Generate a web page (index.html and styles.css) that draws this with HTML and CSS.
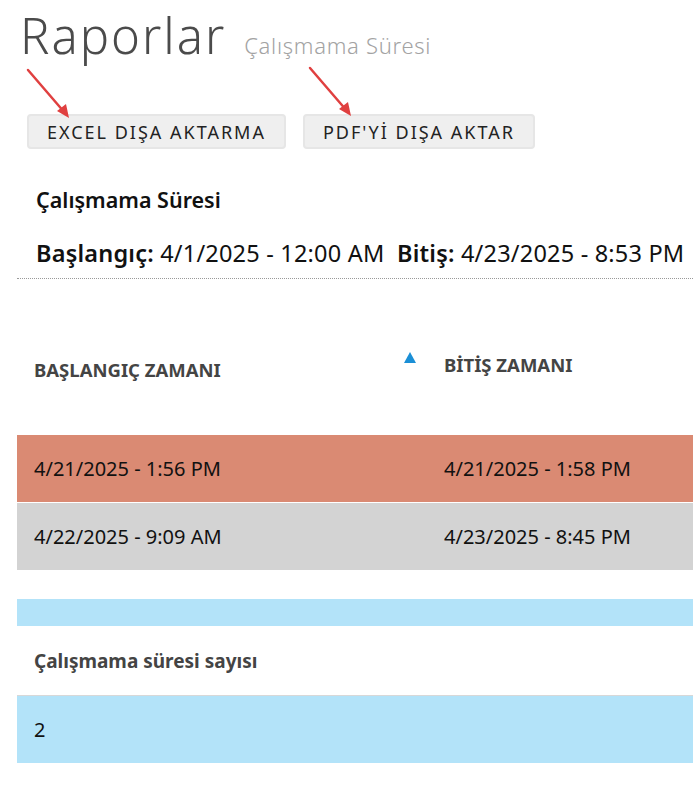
FILE: index.html
```html
<!DOCTYPE html>
<html lang="tr">
<head>
<meta charset="utf-8">
<link rel="stylesheet" href="styles.css">
</head>
<body>
<div class="page">
  <header class="title-row">
    <h1 class="title">Raporlar</h1>
    <span class="subtitle">Çalışmama Süresi</span>
  </header>
  <div class="actions">
    <button class="btn">EXCEL DIŞA AKTARMA</button>
    <button class="btn">PDF'Yİ DIŞA AKTAR</button>
  </div>
  <section class="summary">
    <h2 class="summary-title">Çalışmama Süresi</h2>
    <p class="range"><b>Başlangıç:</b> 4/1/2025 - 12:00 AM&nbsp; <b>Bitiş:</b> 4/23/2025 - 8:53 PM</p>
  </section>
  <div class="table">
    <div class="thead">
      <div class="th th-start">BAŞLANGIÇ ZAMANI</div>
      <div class="th th-end"><span class="sort"></span>BİTİŞ ZAMANI</div>
    </div>
    <div class="row row-red"><div class="cell">4/21/2025 - 1:56 PM</div><div class="cell">4/21/2025 - 1:58 PM</div></div>
    <div class="row row-grey"><div class="cell">4/22/2025 - 9:09 AM</div><div class="cell">4/23/2025 - 8:45 PM</div></div>
  </div>
  <div class="band"></div>
  <div class="count-label">Çalışmama süresi sayısı</div>
  <div class="count-row">2</div>

  <svg class="arrow arrow-1" width="50" height="56" viewBox="0 0 50 56"><line x1="3" y1="3" x2="40" y2="46" stroke="#e04040" stroke-width="2.5" stroke-linecap="round"/><polygon points="44,51 32,44 41,37" fill="#e04040"/></svg>
  <svg class="arrow arrow-2" width="50" height="56" viewBox="0 0 50 56"><line x1="3" y1="3" x2="40" y2="46" stroke="#e04040" stroke-width="2.5" stroke-linecap="round"/><polygon points="44,51 32,44 41,37" fill="#e04040"/></svg>
</div>
</body>
</html>
```
FILE: styles.css
```css
* { box-sizing: border-box; }
html, body { margin: 0; padding: 0; background: #fff; }
body { font-family: "Noto Sans", "Open Sans", sans-serif; color: #111; overflow: hidden; }
.page { position: relative; padding: 0 0 0 17px; width: 693px; }
.title-row { display: flex; align-items: baseline; gap: 18px; padding: 8px 0 0 3px; height: 70px; }
.title { margin: 0; font-size: 49px; font-weight: 300; letter-spacing: 2px; color: #4b4b4b; line-height: 54px; }
.subtitle { font-size: 22px; font-weight: 300; color: #a3a3a3; letter-spacing: 0.7px; }
.actions { display: flex; gap: 17px; padding: 44px 0 0 10px; }
.btn { font-family: inherit; font-size: 18px; letter-spacing: 2px; color: #222; background: #efefef; border: 2px solid #e6e6e6; border-radius: 4px; height: 35px; padding: 0 18px; }
.summary { padding: 37px 0 0 19px; }
.summary-title { margin: 0; font-size: 21.5px; font-weight: 600; line-height: 28px; }
.range { margin: 25px 0 0; font-size: 23.5px; line-height: 28px; white-space: nowrap; letter-spacing: 0.2px; }
.range b { font-weight: 600; }
.table { margin-top: 11px; border-top: 1px dotted #999; }
.thead { display: grid; grid-template-columns: 410px 1fr; height: 156px; }
.th { font-size: 18.5px; font-weight: 700; color: #444; }
.th-start { padding: 78px 0 0 17px; }
.th-end { position: relative; padding: 73px 0 0 17px; }
.sort { position: absolute; left: -23px; top: 73px; width: 0; height: 0; border-left: 6.5px solid transparent; border-right: 6.5px solid transparent; border-bottom: 11px solid #1b8fd6; }
.row { display: grid; grid-template-columns: 410px 1fr; height: 67px; align-items: center; font-size: 20px; }
.row + .row { margin-top: 1px; }
.row-red { background: #da8a73; }
.row-grey { background: #d3d3d3; }
.cell { padding-left: 17px; }
.band { margin-top: 29px; height: 27px; background: #b3e3f9; }
.count-label { height: 69px; padding: 22px 0 0 17px; font-size: 19px; font-weight: 700; color: #444; }
.count-row { height: 68px; background: #b3e3f9; border-top: 1px solid #d8d8d8; padding: 20px 0 0 17px; font-size: 20px; }
.arrow { position: absolute; }
.arrow-1 { left: 25px; top: 67px; }
.arrow-2 { left: 307px; top: 65px; }
```
